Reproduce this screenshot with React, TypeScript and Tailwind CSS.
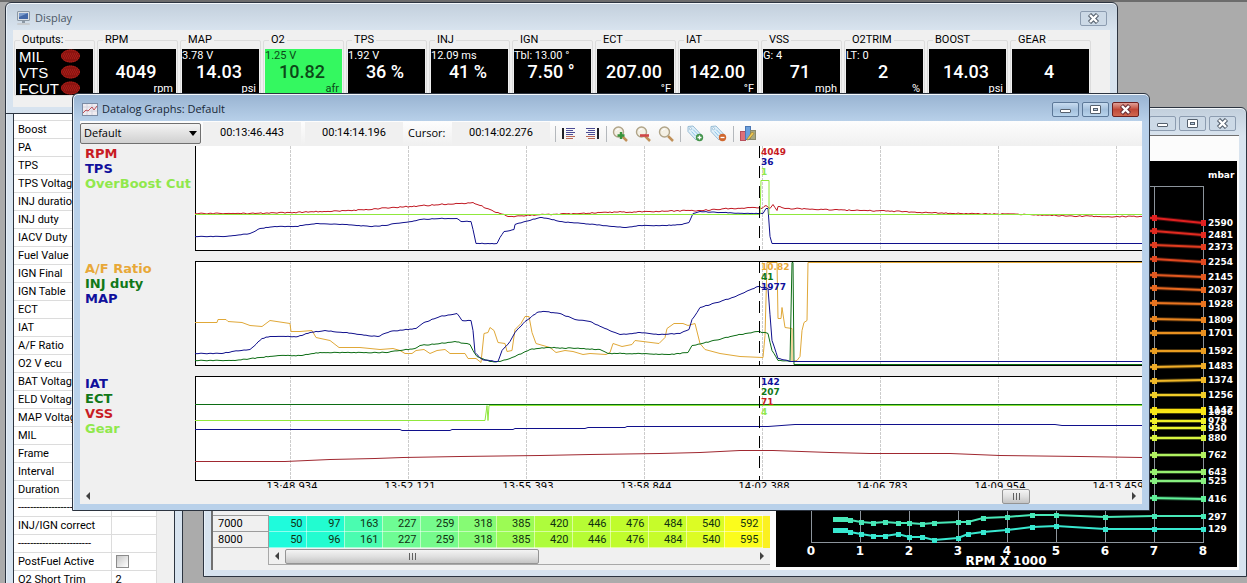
import type { ReactNode } from "react";
import clsx from "clsx";

type Point = [number, number];

type Gauge = {
  label: string;
  value: string;
  note?: string;
  unit?: string;
  alert?: boolean;
};

const gauges: Gauge[] = [
  { label: "RPM", value: "4049", unit: "rpm" },
  { label: "MAP", value: "14.03", note: "3.78 V", unit: "psi" },
  { label: "O2", value: "10.82", note: "1.25 V", unit: "afr", alert: true },
  { label: "TPS", value: "36 %", note: "1.92 V" },
  { label: "INJ", value: "41 %", note: "12.09 ms" },
  { label: "IGN", value: "7.50 °", note: "Tbl: 13.00 °" },
  { label: "ECT", value: "207.00", unit: "°F" },
  { label: "IAT", value: "142.00", unit: "°F" },
  { label: "VSS", value: "71", note: "G: 4", unit: "mph" },
  { label: "O2TRIM", value: "2", note: "LT: 0", unit: "%" },
  { label: "BOOST", value: "14.03", unit: "psi" },
  { label: "GEAR", value: "4" },
];

const sensors = [
  "MAP",
  "Boost",
  "PA",
  "TPS",
  "TPS Voltage",
  "INJ duration",
  "INJ duty",
  "IACV Duty",
  "Fuel Value",
  "IGN Final",
  "IGN Table",
  "ECT",
  "IAT",
  "A/F Ratio",
  "O2 V ecu",
  "BAT Voltage",
  "ELD Voltage",
  "MAP Voltage",
  "MIL",
  "Frame",
  "Interval",
  "Duration",
  "-----------------------",
  "INJ/IGN correct",
  "------------------------",
  "PostFuel Active",
  "O2 Short Trim",
];

const tableColors = [
  "bg-[#1ffbdc]",
  "bg-[#22fcd0]",
  "bg-[#4afcb0]",
  "bg-[#6efc94]",
  "bg-[#76fb8c]",
  "bg-[#86fb74]",
  "bg-[#9cfb54]",
  "bg-[#aefc3c]",
  "bg-[#b6fc34]",
  "bg-[#c0fc2c]",
  "bg-[#c6fc2a]",
  "bg-[#dcfc24]",
  "bg-[#fbfc1c]",
];

const tableRows = [
  { rpm: "7000", cells: [50, 97, 163, 227, 259, 318, 385, 420, 446, 476, 484, 540, 592] },
  { rpm: "8000", cells: [50, 96, 161, 227, 259, 318, 385, 420, 446, 476, 484, 540, 595] },
];

type Series = { name: string; value: string; color: string; text: string; noise?: number; points: Point[] };

const RED = "#c01822";
const BLUE = "#10108c";
const GREEN = "#0c6c14";
const LIME = "#90e83c";
const ORANGE = "#e0a838";

const plots: { top: number; series: Series[] }[] = [
  {
    top: 146,
    series: [
      {
        name: "RPM", value: "4049", color: RED, text: "text-[#c81c24]", noise: 0.6,
        points: [[195, 213], [255, 213], [290, 212], [320, 211], [350, 210], [380, 208], [410, 206], [440, 204], [460, 203], [473, 202], [480, 205], [490, 209], [500, 213], [510, 216], [530, 215], [545, 214], [580, 213], [600, 212], [650, 211], [690, 210], [700, 210], [730, 208], [755, 207], [762, 208], [766, 205], [770, 208], [773, 204], [777, 210], [778, 206], [785, 208], [800, 208], [815, 209], [860, 210], [905, 211], [920, 212], [960, 213], [1030, 214], [1056, 215], [1100, 216], [1142, 216]],
      },
      {
        name: "TPS", value: "36", color: BLUE, text: "text-[#10109c]", noise: 0.3,
        points: [[195, 236], [225, 236], [235, 235], [250, 233], [260, 228], [275, 226], [298, 226], [300, 225], [318, 223], [345, 224], [370, 226], [385, 225], [395, 223], [412, 221], [420, 219], [440, 218], [457, 218], [461, 221], [471, 221], [473, 229], [476, 243], [497, 243], [500, 237], [504, 231], [514, 229], [515, 224], [525, 221], [540, 217], [548, 218], [560, 221], [570, 222], [595, 224], [612, 226], [624, 227], [640, 225], [665, 225], [682, 224], [689, 222], [693, 213], [700, 211], [720, 212], [750, 213], [763, 213], [766, 208], [768, 208], [770, 236], [772, 243], [1142, 243]],
      },
      {
        name: "OverBoost Cut", value: "1", color: LIME, text: "text-[#90e84c]",
        points: [[195, 214], [760, 214], [761, 180], [769, 180], [769, 214], [1142, 214]],
      },
    ],
  },
  {
    top: 261,
    series: [
      {
        name: "A/F Ratio", value: "10.82", color: ORANGE, text: "text-[#e8a838]",
        points: [[195, 322], [217, 322], [218, 319], [226, 319], [228, 321], [242, 322], [250, 325], [262, 326], [270, 320], [290, 323], [291, 331], [300, 331], [312, 330], [316, 337], [330, 340], [339, 347], [360, 347], [380, 349], [393, 348], [400, 350], [405, 353], [412, 353], [416, 350], [424, 349], [430, 353], [437, 350], [445, 349], [450, 353], [465, 353], [468, 358], [476, 358], [481, 362], [484, 333], [488, 332], [490, 327], [494, 330], [498, 342], [505, 343], [507, 351], [512, 350], [515, 329], [521, 323], [525, 316], [529, 316], [532, 332], [536, 343], [550, 347], [556, 352], [565, 350], [573, 351], [583, 354], [590, 353], [606, 354], [610, 352], [613, 343], [622, 346], [632, 344], [635, 340], [643, 341], [659, 343], [665, 337], [667, 328], [674, 323], [683, 323], [688, 325], [695, 323], [700, 343], [705, 349], [720, 353], [740, 356], [763, 357], [765, 335], [767, 262], [777, 262], [778, 318], [781, 318], [782, 307], [785, 327], [792, 328], [792, 361], [797, 360], [800, 356], [802, 330], [804, 322], [807, 320], [808, 262], [1142, 262]],
      },
      {
        name: "INJ duty", value: "41", color: GREEN, text: "text-[#107818]", noise: 0.4,
        points: [[195, 360], [235, 360], [260, 357], [280, 355], [300, 355], [320, 352], [385, 352], [400, 350], [415, 348], [420, 345], [440, 343], [455, 341], [470, 344], [473, 350], [477, 356], [490, 361], [500, 361], [515, 356], [530, 349], [548, 347], [580, 348], [600, 349], [608, 353], [640, 353], [670, 354], [688, 352], [692, 345], [710, 341], [735, 335], [758, 331], [768, 333], [772, 350], [778, 360], [790, 361], [792, 262], [793, 262], [794, 364], [1142, 364]],
      },
      {
        name: "MAP", value: "1977", color: BLUE, text: "text-[#10109c]", noise: 0.4,
        points: [[195, 353], [222, 353], [232, 351], [250, 349], [262, 338], [270, 336], [298, 336], [310, 332], [325, 330], [345, 332], [360, 334], [378, 336], [390, 331], [416, 328], [424, 322], [440, 316], [457, 313], [462, 320], [471, 320], [473, 330], [475, 352], [482, 359], [498, 361], [502, 350], [510, 341], [515, 332], [525, 321], [537, 312], [545, 311], [560, 313], [575, 319], [590, 321], [605, 328], [620, 334], [640, 332], [660, 334], [680, 333], [689, 329], [692, 319], [697, 312], [700, 307], [730, 298], [758, 286], [768, 288], [772, 340], [778, 358], [790, 361], [1142, 361]],
      },
    ],
  },
  {
    top: 376,
    series: [
      {
        name: "IAT", value: "142", color: BLUE, text: "text-[#10109c]",
        points: [[195, 429], [400, 429], [402, 430], [450, 430], [452, 429], [513, 429], [515, 428], [585, 428], [588, 427], [625, 427], [627, 426], [768, 426], [795, 424], [1055, 424], [1062, 425], [1142, 425]],
      },
      { name: "ECT", value: "207", color: GREEN, text: "text-[#107818]", points: [[195, 404], [1142, 404]] },
      {
        name: "VSS", value: "71", color: "#a02830", text: "text-[#c81c24]",
        points: [[195, 461], [285, 461], [330, 459], [375, 458], [403, 457], [460, 456], [540, 455], [590, 454], [660, 453], [700, 452], [740, 450], [773, 450], [830, 452], [870, 453], [950, 453], [1000, 455], [1080, 456], [1142, 457]],
      },
      {
        name: "Gear", value: "4", color: LIME, text: "text-[#90e84c]",
        points: [[195, 420], [485, 420], [487, 405], [488, 420], [489, 405], [1142, 405]],
      },
    ],
  },
];

const PLOT_LEFT = 195;
const PLOT_WIDTH = 947;
const CURSOR_X = 759;

const ticks = [
  { x: 290, label: "13:48.934" },
  { x: 408, label: "13:52.121" },
  { x: 526, label: "13:55.393" },
  { x: 644, label: "13:58.844" },
  { x: 762, label: "14:02.388" },
  { x: 880, label: "14:06.783" },
  { x: 998, label: "14:09.954" },
  { x: 1116, label: "14:13.459" },
];

const percent = (x: number) => `${((x - PLOT_LEFT) / PLOT_WIDTH) * 100}%`;

// Resample the trace every 2px and add a little sensor noise
function tracePath(points: Point[], noise = 0) {
  const out: string[] = [];
  points.forEach(([x, y], i) => {
    out.push(`${x},${y + 0.5}`);
    const next = points[i + 1];
    if (!next || !noise || next[0] - x > 100) return;
    for (let px = x + 2; px < next[0] - 1; px += 2) {
      const base = y + ((next[1] - y) * (px - x)) / (next[0] - x);
      const hash = Math.sin(px * 12.9898) * 43758.5453;
      const n = (hash - Math.floor(hash) - 0.5) * 2 * noise;
      out.push(`${px},${(base + n + 0.5).toFixed(1)}`);
    }
  });
  return out.join(" ");
}

const mapLines: { label: string; color: string; y7: number; y8: number }[] = [
  { label: "2590", color: "#e02020", y7: 218, y8: 223 },
  { label: "2481", color: "#e02a20", y7: 231, y8: 235 },
  { label: "2373", color: "#e03c20", y7: 245, y8: 247 },
  { label: "2254", color: "#e04820", y7: 259, y8: 262 },
  { label: "2145", color: "#e05820", y7: 275, y8: 277 },
  { label: "2037", color: "#e86820", y7: 288, y8: 290 },
  { label: "1928", color: "#e87420", y7: 303, y8: 304 },
  { label: "1809", color: "#e88420", y7: 319, y8: 320 },
  { label: "1701", color: "#e89020", y7: 333, y8: 333 },
  { label: "1592", color: "#e89c20", y7: 351, y8: 351 },
  { label: "1483", color: "#f0ac28", y7: 367, y8: 366 },
  { label: "1374", color: "#f0b828", y7: 381, y8: 380 },
  { label: "1256", color: "#f0cc28", y7: 395, y8: 395 },
  { label: "1147", color: "#f8e010", y7: 410, y8: 410 },
  { label: "1036", color: "#f8e818", y7: 412, y8: 412 },
  { label: "979", color: "#f0f028", y7: 421, y8: 421 },
  { label: "930", color: "#e8f430", y7: 428, y8: 428 },
  { label: "880", color: "#d8f440", y7: 438, y8: 438 },
  { label: "762", color: "#b0f060", y7: 455, y8: 455 },
  { label: "643", color: "#98f070", y7: 472, y8: 472 },
  { label: "525", color: "#88f080", y7: 481, y8: 481 },
  { label: "416", color: "#60f098", y7: 498, y8: 499 },
];

const lowLines: { label: string; color: string; points: Point[] }[] = [
  {
    label: "297", color: "#48e8b8",
    points: [[835, 519], [840, 519], [845, 519], [850, 520], [861, 522], [873, 523], [885, 522], [898, 523], [909, 523], [922, 524], [934, 523], [958, 522], [968, 522], [983, 518], [1007, 517], [1032, 515], [1056, 515], [1105, 517], [1154, 516], [1203, 516]],
  },
  {
    label: "129", color: "#38e8d0",
    points: [[835, 530], [840, 530], [845, 530], [850, 532], [861, 534], [873, 536], [885, 536], [898, 534], [909, 537], [922, 537], [934, 540], [958, 538], [968, 534], [983, 532], [1007, 530], [1032, 527], [1056, 526], [1105, 529], [1154, 529], [1203, 529]],
  },
];

function CaptionButton({ kind, active }: { kind: "Minimize" | "Maximize" | "Close"; active?: boolean }) {
  const red = active && kind === "Close";
  return (
    <button
      type="button"
      aria-label={kind}
      className={clsx(
        "flex h-[15px] w-[27px] items-center justify-center rounded-xs border",
        red && "border-[#6c2020] bg-linear-to-b from-[#e0a098] via-[#c04838] to-[#d06850]",
        active && !red && "border-[#5c7898] bg-linear-to-b from-[#c8dcf0] via-[#a4c0dc] to-[#b8d4ec]",
        !active && "border-[#8c9cb0] bg-[#ccd9e6]",
      )}
    >
      <svg width="13" height="11" viewBox="0 0 13 11" fill="none">
        {kind === "Minimize" && <rect x="1.5" y="5.5" width="10" height="3" rx="0.5" fill="#fff" stroke="#56616e" />}
        {kind === "Maximize" && (
          <>
            <rect x="1.5" y="1.5" width="10" height="8" rx="0.5" fill="#fff" stroke="#56616e" />
            <rect x="4.5" y="4.5" width="4" height="2" fill="#b8cce0" stroke="#56616e" />
          </>
        )}
        {kind === "Close" && (
          <>
            <path d="M2.5 1.500 10.500 9.500M10.500 1.500 2.500 9.500" stroke={red ? "#6c3038" : "#56616e"} strokeWidth="4.500" />
            <path d="M3 2 10 9M10 2 3 9" stroke="#fff" strokeWidth="2.400" />
          </>
        )}
      </svg>
    </button>
  );
}

type WindowProps = {
  title?: string;
  icon?: ReactNode;
  active?: boolean;
  buttons?: ("Minimize" | "Maximize" | "Close")[];
  className: string;
  children: ReactNode;
};

function MdiWindow({ title, icon, active, buttons = [], className, children }: WindowProps) {
  return (
    <section
      className={clsx(
        "absolute flex flex-col rounded-t-md border border-[#2c3440] px-[7px] pb-[6px]",
        active
          ? "bg-linear-to-b from-[#98b3d1] from-0% via-[#b9d1ea] via-[28px] to-[#b9d1ea]"
          : "bg-linear-to-b from-[#c2cfdc] from-0% via-[#d9e4ef] via-[28px] to-[#d7e3ef]",
        "shadow-[inset_0_1px_0_#f4f8fc,inset_1px_0_0_#e8f0f8]",
        className,
      )}
    >
      <header className="flex h-[27px] shrink-0 items-center gap-1 pt-1">
        {icon}
        <h2 className={clsx("flex-1 font-['Open_Sans',sans-serif] text-[11px]", active ? "text-[#182838]" : "text-[#4c5864]")}>
          {title}
        </h2>
        <div className="flex gap-[3px] pr-[3px]">
          {buttons.map((kind) => (
            <CaptionButton key={kind} kind={kind} active={active} />
          ))}
        </div>
      </header>
      {children}
    </section>
  );
}

function MonitorIcon() {
  return (
    <svg width="15" height="15" viewBox="0 0 15 15" className="ml-[3px]">
      <rect x="1.5" y="0.5" width="12" height="9" rx="0.5" fill="#dce0e4" stroke="#8c98a4" />
      <rect x="3" y="2" width="9" height="6" fill="#4468a8" />
      <path d="M3 2h9L3 6z" fill="#7c9ccc" />
      <path d="M6 10h3v2h3v1H3v-1h3z" fill="#8c98a4" />
      <rect x="1" y="12" width="13" height="2" rx="1" fill="#c8ccd0" />
    </svg>
  );
}

function ChartIcon() {
  return (
    <svg width="16" height="13" viewBox="0 0 16 13" className="ml-[2px]">
      <rect x="0.5" y="0.5" width="15" height="12" fill="#f0ecf0" stroke="#7c8ca4" />
      <path d="M1 4h14M1 8h14M5 1v11M10 1v11" stroke="#d4d4e0" />
      <path d="M1 10l3-3 2 1 4-4 2 3 3-4" fill="none" stroke="#c05058" />
    </svg>
  );
}

function GaugeBox({ gauge }: { gauge: Gauge }) {
  return (
    <fieldset className="w-[81px] shrink-0 rounded-xs border border-[#dcdcdc] px-px">
      <legend className="ml-1 px-[2px] text-[11px] leading-[14px]">{gauge.label}</legend>
      <div
        className={clsx(
          "relative mt-[2px] flex h-[46px] items-center justify-center pr-[3px]",
          gauge.alert ? "bg-[#34f860] text-[#0c4818]" : "bg-black text-white",
        )}
      >
        <span className="absolute top-0 left-0 text-[11px] leading-[14px] whitespace-nowrap">{gauge.note}</span>
        <span className="text-[18px] leading-5 font-medium">{gauge.value}</span>
        <span className="absolute right-[3px] bottom-0 text-[11px] leading-[13px]">{gauge.unit}</span>
      </div>
    </fieldset>
  );
}

function DisplayWindow() {
  return (
    <MdiWindow title="Display" icon={<MonitorIcon />} buttons={["Close"]} className="top-[2px] right-[129px] left-[5px] h-28">
      <div className="flex flex-1 items-start gap-[2px] overflow-hidden bg-[#f0f0f0] pt-[3px] pl-px">
        <fieldset className="w-[81px] shrink-0 rounded-xs border border-[#dcdcdc] px-px">
          <legend className="ml-1 px-[2px] text-[11px] leading-[14px]">Outputs:</legend>
          <ul className="mt-[2px] h-[46px] overflow-hidden bg-black font-['Liberation_Sans',sans-serif] text-[15px] leading-[15px] text-white">
            {["MIL", "VTS", "FCUT"].map((name) => (
              <li key={name} className="flex h-4 items-start justify-between pr-[13px] pl-[3px]">
                {name}
                <svg width="19" height="14" viewBox="0 0 19 14" className="shrink-0">
                  <ellipse cx="9.5" cy="7" rx="9.5" ry="6.5" fill="#8c1410" />
                  <ellipse cx="9.5" cy="7" rx="9" ry="6" fill="none" stroke="#c02820" strokeDasharray="1 1" />
                  <path d="M3 5h13M2 7h15M3 9h13" stroke="#b82420" strokeDasharray="1 1" />
                </svg>
              </li>
            ))}
          </ul>
        </fieldset>
        {gauges.map((gauge) => (
          <GaugeBox key={gauge.label} gauge={gauge} />
        ))}
      </div>
    </MdiWindow>
  );
}

function SensorWindow() {
  return (
    <MdiWindow className="top-[74px] left-[5px] h-[540px] w-[178px]">
      <div className="flex flex-1 overflow-hidden border-x border-[#2c3440] bg-[#f0f0f0]">
        <table className="h-fit w-[143px] table-fixed border-collapse bg-white text-[11px] leading-[17px]">
          <tbody>
            {sensors.map((name) => (
              <tr key={name} className="h-[18px] border-b border-[#dcdcdc]">
                <td className="w-[97px] overflow-hidden border-r border-[#dcdcdc] p-0 pl-1 whitespace-nowrap">
                  {name === "PostFuel Active" ? <label htmlFor="post-fuel">{name}</label> : name}
                </td>
                <td className="border-r border-[#dcdcdc] p-0 pl-1">
                  {name === "PostFuel Active" && (
                    <input
                      id="post-fuel"
                      type="checkbox"
                      className="block size-[13px] appearance-none border border-[#8c8c8c] bg-linear-to-br from-[#c8c8c8] to-white"
                    />
                  )}
                  {name === "O2 Short Trim" && "2"}
                </td>
              </tr>
            ))}
          </tbody>
        </table>
      </div>
    </MdiWindow>
  );
}

function ScrollArrow({ direction }: { direction: "left" | "right" }) {
  return (
    <button type="button" aria-label={`Scroll ${direction}`} className="flex h-full w-4 items-center justify-center">
      <svg width="4" height="8" viewBox="0 0 4 8">
        <path d={direction === "left" ? "M4 0v8L0 4z" : "M0 0v8l4-4z"} fill="#404040" />
      </svg>
    </button>
  );
}

function ScrollThumb({ className }: { className: string }) {
  return (
    <div
      className={clsx(
        "flex h-[15px] items-center justify-center gap-[2px] rounded-xs border border-[#949494] bg-linear-to-b from-[#f4f4f4] via-[#e0e0e0] to-[#c4c4c4]",
        className,
      )}
    >
      <i className="h-[7px] w-px bg-[#606060]" />
      <i className="h-[7px] w-px bg-[#606060]" />
      <i className="h-[7px] w-px bg-[#606060]" />
    </div>
  );
}

function FuelTable() {
  return (
    <div className="flex w-[559px] shrink-0 flex-col justify-end overflow-hidden border-l-2 border-[#707070] bg-[#f0f0f0]">
      <table className="w-fit table-fixed border-collapse text-[11px] leading-[15px]">
        <tbody>
          {tableRows.map((row) => (
            <tr key={row.rpm} className="h-4">
              <th scope="row" className="w-[55px] border-y border-r border-[#9c9c9c] p-0 pl-[5px] text-left font-normal">
                {row.rpm}
              </th>
              {row.cells.map((cell, i) => (
                <td
                  key={i}
                  className={clsx("w-[38px] border border-white/50 p-0 pr-[3px] text-right text-[#103010]", tableColors[i])}
                >
                  {cell}
                </td>
              ))}
              <td className="w-2 bg-[#fbf020] p-0" />
            </tr>
          ))}
        </tbody>
      </table>
      <div className="mb-[5px] ml-[55px] flex h-[17px] items-center border-b border-l border-[#a8a8a8]">
        <ScrollArrow direction="left" />
        <ScrollThumb className="w-[254px]" />
        <div className="flex-1" />
        <ScrollArrow direction="right" />
      </div>
    </div>
  );
}

function MapChart() {
  return (
    <svg viewBox="776 161 461 406" preserveAspectRatio="xMaxYMin meet" className="h-[406px] w-full bg-black">
      <g stroke="#8c949c">
        <path d="M811 542.5h393M811 186.5h393" />
        {[0, 1, 2, 3, 4, 5, 6, 7, 8].map((n) => (
          <path key={n} d={`M${811.5 + n * 49} 186v356`} />
        ))}
      </g>
      {mapLines.map(({ label, color, y7, y8 }) => (
        <g key={label} fill={color}>
          <path d={`M1105 ${y7}L1154 ${y7}L1203 ${y8}`} fill="none" stroke={color} strokeWidth="4" opacity="0.3" />
          <path d={`M1105 ${y7}L1154 ${y7}L1203 ${y8}`} fill="none" stroke={color} strokeWidth="2" />
          <rect x="1152" y={y7 - 3} width="5" height="6" />
          <rect x="1201" y={y8 - 3} width="5" height="6" />
        </g>
      ))}
      {lowLines.map(({ label, color, points }) => (
        <g key={label} fill={color}>
          <polyline points={points.join(" ")} fill="none" stroke={color} strokeWidth="2" />
          {points.map(([x, y]) => (
            <rect key={x} x={x - 2} y={y - 2} width="5" height="5" />
          ))}
        </g>
      ))}
      <g fill="#fff" className="font-['DejaVu_Sans',sans-serif] text-[9px] font-bold">
        <text x="1208" y="178">mbar</text>
        {mapLines.map(({ label, y8 }) => (
          <text key={label} x="1208" y={y8 + 3}>{label}</text>
        ))}
        <text x="1208" y="520">297</text>
        <text x="1208" y="532">129</text>
      </g>
      <g fill="#fff" textAnchor="middle" className="font-['DejaVu_Sans',sans-serif] text-[12px] font-bold">
        {[0, 1, 2, 3, 4, 5, 6, 7, 8].map((n) => (
          <text key={n} x={811 + n * 49} y="555">{n}</text>
        ))}
        <text x="1006" y="565">RPM X 1000</text>
      </g>
    </svg>
  );
}

function TableWindow() {
  return (
    <MdiWindow buttons={["Minimize", "Maximize", "Close"]} className="top-[107px] right-0 left-[203px] h-[470px]">
      <div className="flex flex-1 border-t border-[#707070] bg-[#fcfcfc]">
        <FuelTable />
        <div className="ml-[6px] flex-1 bg-[#fcfcfc] pt-[25px]">
          <MapChart />
        </div>
        <div className="w-[2px] bg-[#fcfcfc]" />
      </div>
    </MdiWindow>
  );
}

function AlignIcon({ flip }: { flip?: boolean }) {
  return (
    <svg width="14" height="13" viewBox="0 0 14 13" className={flip ? "-scale-x-100" : undefined}>
      <rect x="0" y="1" width="2" height="11" fill="#202028" />
      <path d="M4 1.5h9M4 3.5h7M4 5.5h9M4 7.5h7" stroke="#4c4c94" />
      <path d="M4 9.5h9M4 11.5h7" stroke="#b86858" />
    </svg>
  );
}

function LensIcon({ sign }: { sign?: "plus" | "minus" }) {
  return (
    <svg width="16" height="16" viewBox="0 0 16 16" fill="none">
      <path d="M10 10l5 5" stroke="#c09058" strokeWidth="2.5" />
      <circle cx="6.5" cy="6" r="5" fill="#f4f0e4" stroke="#b0a488" strokeWidth="1.4" />
      <path d="M4 5a3 3 0 0 1 3-2" stroke="#fff" />
      {sign === "plus" && <path d="M9 6v7M5.5 9.5h7" stroke="#38943c" strokeWidth="2.4" />}
      {sign === "minus" && <path d="M5 9.5h9" stroke="#d04848" strokeWidth="2.6" />}
    </svg>
  );
}

function TagIcon({ sign }: { sign: "plus" | "minus" }) {
  return (
    <svg width="17" height="17" viewBox="0 0 17 17" fill="none">
      <path d="M1 1.5 6 1l8 8.500-5 5.500L1 6.500z" fill="#e0f0fa" stroke="#98bcd4" />
      <path d="M6 4.5l5 5M4.5 6.5l4 4.500" stroke="#8cc4e8" />
      <circle cx="3.5" cy="3.7" r="1.1" fill="#fff" stroke="#88b0cc" strokeWidth="0.7" />
      <circle cx="12.5" cy="12.5" r="3.7" fill={sign === "plus" ? "#44944c" : "#d06830"} />
      <path d={sign === "plus" ? "M10.5 12.5h4M12.5 10.5v4" : "M10.5 12.5h4"} stroke="#fff" strokeWidth="1.3" />
    </svg>
  );
}

function ChartSettingsIcon() {
  return (
    <svg width="17" height="15" viewBox="0 0 17 15">
      <rect x="0.5" y="5.5" width="5" height="9" fill="#e07078" stroke="#b8505c" />
      <rect x="5.5" y="0.5" width="5" height="13" fill="#6ca0dc" stroke="#4c78b4" />
      <rect x="10.5" y="4.5" width="5" height="9" fill="#a8a880" stroke="#88886c" />
      <path d="M7 13l5-7 2 1.500-5 6-2 .5z" fill="#f0c850" stroke="#987c30" strokeWidth="0.6" />
    </svg>
  );
}

function ToolButton({ label, children }: { label: string; children: ReactNode }) {
  return (
    <button type="button" aria-label={label} className="flex h-5 w-[23px] items-center justify-center">
      {children}
    </button>
  );
}

function Separator() {
  return <div className="mr-px ml-[3px] h-4 w-px bg-[#b4b8bc]" />;
}

function Toolbar() {
  const time = "flex h-[23px] w-[98px] items-center justify-center bg-[#f0f0f0] font-['Roboto',sans-serif]";
  return (
    <div className="flex h-[25px] items-center bg-linear-to-b from-[#fdfdfd] to-[#f0f0f0] font-['Open_Sans',sans-serif] text-[11px]">
      <div className="relative w-[121px]">
        <select
          aria-label="Graph template"
          className="block h-[21px] w-full appearance-none rounded-xs border border-[#707070] bg-linear-to-b from-[#f4f4f4] to-[#d0d0d0] pl-[3px]"
        >
          <option>Default</option>
        </select>
        <svg width="8" height="5" viewBox="0 0 8 5" className="pointer-events-none absolute top-2 right-1">
          <path d="M0 0h8L4 5z" />
        </svg>
      </div>
      <div className="ml-[2px] flex gap-1">
        <span className={time}>00:13:46.443</span>
        <span className={time}>00:14:14.196</span>
      </div>
      <span className="ml-[5px] w-11">Cursor:</span>
      <span className={time}>00:14:02.276</span>
      <div className="ml-[2px] flex items-center">
        <Separator />
        <ToolButton label="Align start"><AlignIcon /></ToolButton>
        <ToolButton label="Align end"><AlignIcon flip /></ToolButton>
        <Separator />
        <ToolButton label="Zoom in"><LensIcon sign="plus" /></ToolButton>
        <ToolButton label="Zoom out"><LensIcon sign="minus" /></ToolButton>
        <ToolButton label="Zoom reset"><LensIcon /></ToolButton>
        <Separator />
        <div className="ml-[2px] flex">
          <ToolButton label="Add tag"><TagIcon sign="plus" /></ToolButton>
          <ToolButton label="Remove tag"><TagIcon sign="minus" /></ToolButton>
        </div>
        <Separator />
        <div className="ml-[2px] flex">
          <ToolButton label="Graph settings"><ChartSettingsIcon /></ToolButton>
        </div>
      </div>
    </div>
  );
}

function Plot({ top, series }: { top: number; series: Series[] }) {
  const first = top === 146;
  return (
    <div className="flex h-[105px]">
      <ul className="w-[115px] shrink-0 pl-[5px] font-['DejaVu_Sans',sans-serif] text-[13px] leading-[15px] font-bold whitespace-nowrap">
        {series.map((s) => (
          <li key={s.name} className={s.text}>{s.name}</li>
        ))}
      </ul>
      <div className="relative flex-1">
        <svg
          viewBox={`${PLOT_LEFT} ${top} ${PLOT_WIDTH} 105`}
          preserveAspectRatio="none"
          fill="none"
          className="block h-full w-full bg-white"
        >
          {ticks.map(({ x }) => (
            <path key={x} d={`M${x + 0.5} ${top}v105`} stroke="#cccccc" strokeDasharray="3 1" />
          ))}
          {!first && <path d={`M195 ${top + 0.5}h947`} stroke="#000" />}
          <path d={`M195.5 ${top}v105M195 ${top + 104.5}h947`} stroke="#000" />
          {series.map((s) => (
            <polyline key={s.name} points={tracePath(s.points, s.noise)} stroke={s.color} />
          ))}
          <path d={`M${CURSOR_X + 0.5} ${top}v105`} stroke="#000" strokeDasharray="12 8" />
        </svg>
        <ul
          className="absolute top-px font-['DejaVu_Sans',sans-serif] text-[9px] leading-[10px] font-bold"
          style={{ left: percent(CURSOR_X + 2) }}
        >
          {series.map((s) => (
            <li key={s.name} className={s.text}>{s.value}</li>
          ))}
        </ul>
      </div>
    </div>
  );
}

function DatalogWindow() {
  return (
    <MdiWindow
      active
      title="Datalog Graphs: Default"
      icon={<ChartIcon />}
      buttons={["Minimize", "Maximize", "Close"]}
      className="top-[93px] right-[97px] left-[72px]"
    >
      <div className="overflow-hidden bg-[#f0f0f0]">
        <Toolbar />
        <div className="flex flex-col gap-[10px]">
          {plots.map((plot) => (
            <Plot key={plot.top} {...plot} />
          ))}
        </div>
        <div className="relative ml-[115px] h-[7px] overflow-hidden font-['DejaVu_Sans',sans-serif] text-[10px] leading-3">
          {ticks.map(({ x, label }) => (
            <span key={x} className="absolute top-0 -translate-x-1/2" style={{ left: percent(x + 2) }}>
              {label}
            </span>
          ))}
        </div>
        <div className="flex h-4 items-center">
          <ScrollArrow direction="left" />
          <div className="flex-1" />
          <ScrollThumb className="mr-24 w-7" />
          <ScrollArrow direction="right" />
        </div>
      </div>
    </MdiWindow>
  );
}

export default function App() {
  return (
    <main className="relative h-screen overflow-hidden border-t-2 border-[#6c6c6c] bg-[#ababab] font-['Roboto',sans-serif] text-black">
      <div className="absolute inset-x-0 -top-[2px] bottom-0">
        <SensorWindow />
        <TableWindow />
        <DisplayWindow />
        <DatalogWindow />
      </div>
    </main>
  );
}
